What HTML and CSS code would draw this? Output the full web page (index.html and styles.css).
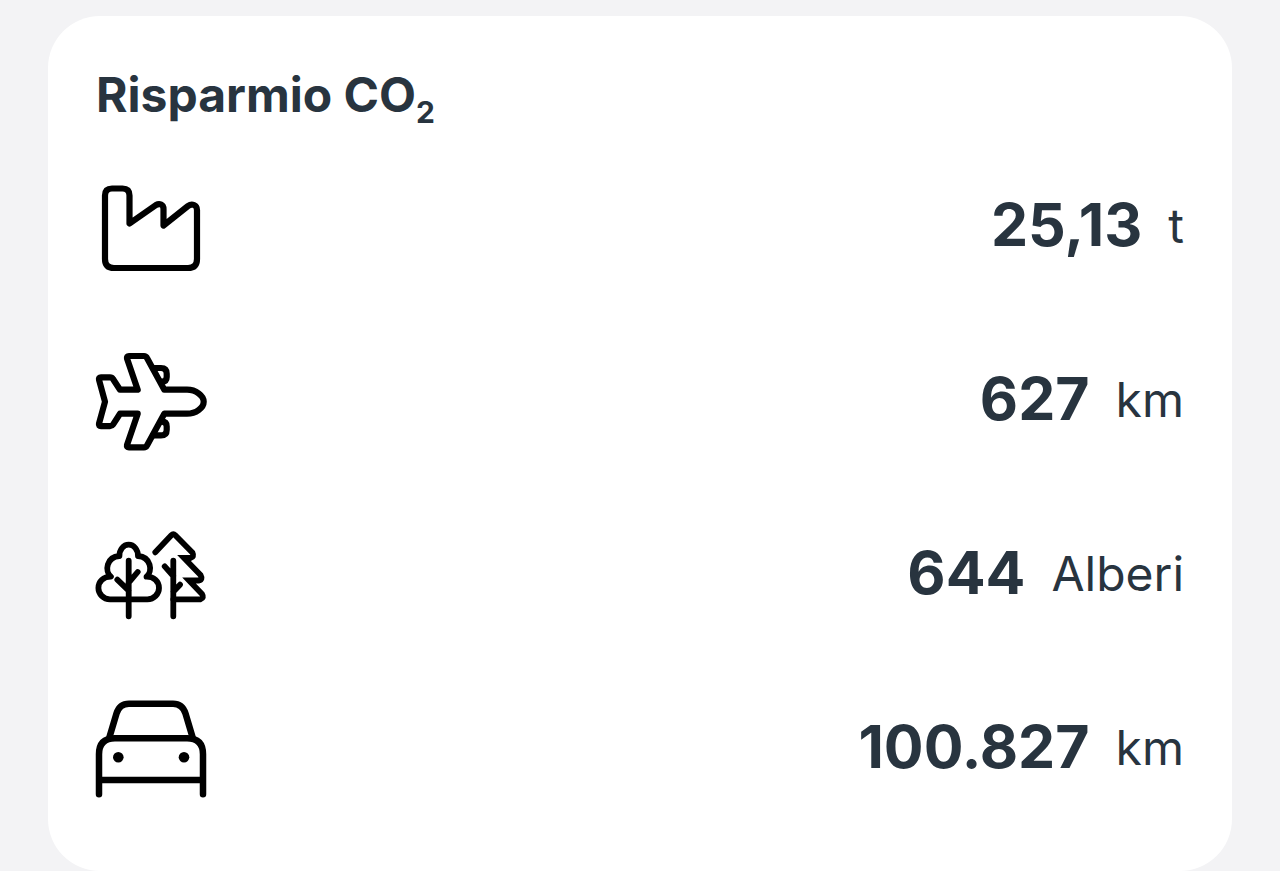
FILE: index.html
```html
<!DOCTYPE html>
<html lang="it">
<head>
    <meta charset="UTF-8">
    <meta name="viewport" content="width=device-width, initial-scale=1.0">
    <title>Risparmio CO₂</title>
    <link rel="stylesheet" href="styles.css">
</head>
<body>
    <main class="card">
        <h1 class="card-title">Risparmio CO<sub>2</sub></h1>

        <ul class="savings">
            <li class="saving">
                <svg class="icon" viewBox="0 0 112 112" stroke-width="6.2" aria-hidden="true">
                    <path d="M33.5 51.500V23.500q0-7-7-7H16q-7 0-7 7V87q0 9 9 9h74q9 0 9-9V38c0-5-5-7-9-4L67.500 53.500V37c0-4.500-4-6-7.500-4z" />
                </svg>
                <span class="value">25,13</span>
                <span class="unit">t</span>
            </li>

            <li class="saving">
                <svg class="icon" viewBox="0 0 112 112" stroke-width="6.2" aria-hidden="true">
                    <path d="M91 43.700H68.300L51 12q-1-2-3-2H33q-2.500 0-2 2.500l10.700 31.200H24L17 33q-1-1.700-3-1.700H5q-2.500 0-2 2.500l6 21.900-6 21.900q-.5 2.500 2 2.500h9q2 0 3-1.500l7-10.900h17.700L31 98.900q-.5 2.500 2 2.500h15q2 0 3-2l17.300-31.700H91c9 0 16.700-6 16.700-12S100 43.700 91 43.700z" />
                    <path d="M57 22h8q5.700 0 5.700 5.700V31q0 4.500-4.700 4.700M57 89.400h8q5.700 0 5.700-5.700v-3.300q0-4.500-4.700-4.700" />
                </svg>
                <span class="value">627</span>
                <span class="unit">km</span>
            </li>

            <li class="saving">
                <svg class="icon" viewBox="0 0 112 112" stroke-width="5.8" aria-hidden="true">
                    <path d="M14 79.300h37.400C58 79.300 63 74 63 68c0-6.500-5-11.300-12.500-11.300C57 51 55 37 42 36c0-6.300-4-11.300-9.300-11.300s-9.300 5-9.300 11.300C10.400 37 8.400 51 14.900 56.700 7.400 56.700 2.400 61.500 2.400 68c0 6 5 11.300 11.600 11.300z" />
                    <path d="M32.700 40.700v55.600M41.700 52l-9 10.700M21.300 59.700l11.400 11" />
                    <path stroke-linejoin="miter" d="M59.300 32.300l16-17q2-2 4 0l17.200 17.500q2 4-2 5.200H88l16.500 17q2.500 4.500-1.500 5.500H93l13 13.500q2.500 4-1.500 5.300H77.300" />
                    <path d="M77.300 40.700v55.600M68.700 46.300l8.600 9.700M84 64.700l-6.700 7" />
                </svg>
                <span class="value">644</span>
                <span class="unit">Alberi</span>
            </li>

            <li class="saving">
                <svg class="icon" viewBox="0 0 112 112" stroke-width="6.5" aria-hidden="true">
                    <path d="M3 100.300V60.300q0-16 16-16h72q16 0 16 16v40M3 86h104" />
                    <path d="M13.500 43l7-23.500q3-9.800 12.500-9.800h44q9.500 0 12.500 9.800l7 23.500" />
                    <circle class="lamp" cx="22.300" cy="63.300" r="5.300" />
                    <circle class="lamp" cx="88" cy="63.300" r="5.300" />
                </svg>
                <span class="value">100.827</span>
                <span class="unit">km</span>
            </li>
        </ul>
    </main>
</body>
</html>
```

FILE: styles.css
```css
* {
    box-sizing: border-box;
}

body {
    font-family: Inter, "Liberation Sans", sans-serif;
    margin: 0;
    padding: 16px 48px 0;
    background-color: #f3f3f5;
    color: #28343f;
}

.card {
    background: #fff;
    border-radius: 52px;
    padding: 48px 48px 65px;
}

.card-title {
    margin: 0 0 46px;
    font-size: 48px;
    line-height: 62px;
    font-weight: 700;
}

.card-title sub {
    font-size: 30px;
    line-height: 0;
}

.savings {
    display: grid;
    gap: 62px;
    margin: 0;
    padding: 0;
    list-style: none;
}

.saving {
    display: flex;
    align-items: center;
}

.icon {
    width: 112px;
    height: 112px;
    margin-right: auto;
    overflow: visible;
    fill: none;
    stroke: #000;
    stroke-linecap: round;
    stroke-linejoin: round;
}

.lamp {
    fill: #000;
    stroke: none;
}

.value,
.unit {
    line-height: 64px;
}

.value {
    margin-right: 26px;
    padding-bottom: 7px;
    font-size: 59px;
    font-weight: 700;
}

.unit {
    padding-bottom: 5px;
    font-size: 48px;
    font-weight: 400;
}
```
